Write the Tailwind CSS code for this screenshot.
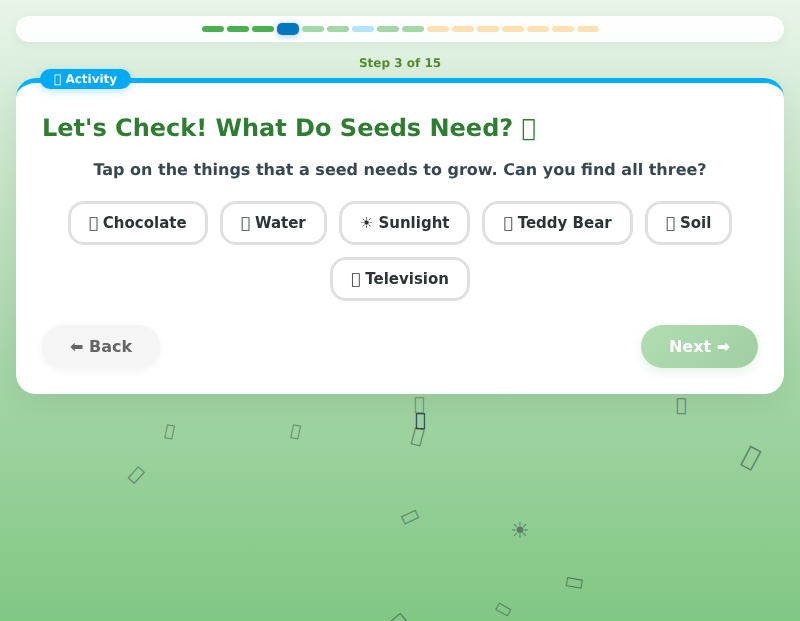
<!DOCTYPE html>
<html lang="en">
<head>
<meta charset="utf-8">
<script src="https://cdn.jsdelivr.net/npm/@tailwindcss/browser@4"></script>
</head>
<body class="m-0">
<div class="relative w-[800px] h-[621px] overflow-hidden font-['DejaVu_Sans',sans-serif] [text-rendering:geometricPrecision] bg-[linear-gradient(180deg,#e8f5e9_0%,#a5d6a7_60%,#81c784_100%)]">
  <div aria-hidden="true" class="absolute inset-0 text-[#263238]">
    <span class="absolute left-[414px] top-[395px] text-[18px] leading-[20px] opacity-40">&#xE000;</span>
    <span class="absolute left-[415px] top-[411px] text-[18px] leading-[20px]">&#xE000;</span>
    <span class="absolute left-[412px] top-[424px] text-[20px] leading-[22px] opacity-50 rotate-[15deg]">&#xE000;</span>
    <span class="absolute left-[165px] top-[422px] text-[16px] leading-[18px] opacity-50 rotate-[12deg]">&#xE000;</span>
    <span class="absolute left-[291px] top-[422px] text-[16px] leading-[18px] opacity-50 rotate-[12deg]">&#xE000;</span>
    <span class="absolute left-[131px] top-[465px] text-[18px] leading-[20px] opacity-50 rotate-[42deg]">&#xE000;</span>
    <span class="absolute left-[405px] top-[507px] text-[18px] leading-[20px] opacity-50 rotate-[65deg]">&#xE000;</span>
    <span class="absolute left-[510px] top-[520px] text-[22px] leading-[24px] opacity-50">☀</span>
    <span class="absolute left-[569px] top-[573px] text-[18px] leading-[20px] opacity-50 rotate-[100deg]">&#xE000;</span>
    <span class="absolute left-[499px] top-[601px] text-[16px] leading-[18px] opacity-50 rotate-[120deg]">&#xE000;</span>
    <span class="absolute left-[392px] top-[610px] text-[20px] leading-[22px] opacity-50 rotate-[50deg]">&#xE000;</span>
    <span class="absolute left-[676px] top-[396px] text-[18px] leading-[20px] opacity-50">&#xE000;</span>
    <span class="absolute left-[744px] top-[444px] text-[25px] leading-[26px] opacity-50 rotate-[28deg]">&#xE000;</span>
  </div>

  <div class="relative flex flex-col p-4 [will-change:transform]">
    <div class="flex justify-center gap-[3px] items-center h-[26px] rounded-[13px] bg-white/90 shadow-[0_2px_12px_rgba(0,0,0,0.05)]">
      <span class="w-[22px] h-[6px] rounded-full bg-[#4caf50]"></span>
      <span class="w-[22px] h-[6px] rounded-full bg-[#4caf50]"></span>
      <span class="w-[22px] h-[6px] rounded-full bg-[#4caf50]"></span>
      <span class="w-[22px] h-[12px] rounded-[5px] bg-[#0277bd] shadow-[0_1px_6px_rgba(2,119,189,0.4)]"></span>
      <span class="w-[22px] h-[6px] rounded-full bg-[#a5d6a7]"></span>
      <span class="w-[22px] h-[6px] rounded-full bg-[#a5d6a7]"></span>
      <span class="w-[22px] h-[6px] rounded-full bg-[#b3e5fc]"></span>
      <span class="w-[22px] h-[6px] rounded-full bg-[#a5d6a7]"></span>
      <span class="w-[22px] h-[6px] rounded-full bg-[#a5d6a7]"></span>
      <span class="w-[22px] h-[6px] rounded-full bg-[#ffe0b2]"></span>
      <span class="w-[22px] h-[6px] rounded-full bg-[#ffe0b2]"></span>
      <span class="w-[22px] h-[6px] rounded-full bg-[#ffe0b2]"></span>
      <span class="w-[22px] h-[6px] rounded-full bg-[#ffe0b2]"></span>
      <span class="w-[22px] h-[6px] rounded-full bg-[#ffe0b2]"></span>
      <span class="w-[22px] h-[6px] rounded-full bg-[#ffe0b2]"></span>
      <span class="w-[22px] h-[6px] rounded-full bg-[#ffe0b2]"></span>
    </div>

    <p class="mt-[14px] text-center text-[12px] leading-[15px] font-bold text-[#558b2f]">Step 3 of 15</p>

    <div class="relative mt-[7px] h-[316px] rounded-[20px] bg-white border-t-[5px] border-[#00b0ff] px-[26px] pt-[27px] shadow-[0_8px_32px_rgba(0,0,0,0.08)]">
      <span class="absolute left-[24px] top-[-14px] h-[20px] px-[14px] rounded-full bg-[#03a9f4] text-white text-[12px] leading-[20px] font-bold shadow-[0_2px_8px_rgba(3,169,244,0.3)]">&#xE000; Activity</span>
      <h1 class="text-[24px] leading-[36px] font-bold text-[#2e7d32]">Let's Check! What Do Seeds Need? &#xE000;</h1>
      <p class="mt-[12px] text-center text-[16px] leading-[24px] font-bold text-[#37474f]">Tap on the things that a seed needs to grow. Can you find all three?</p>
      <div class="mt-[19px] flex flex-wrap justify-center gap-3">
        <button class="h-[44px] px-[18px] rounded-2xl border-[3px] border-[#e0e0e0] bg-white text-[15px] font-bold text-[#2d3436]">&#xE000; Chocolate</button>
        <button class="h-[44px] px-[18px] rounded-2xl border-[3px] border-[#e0e0e0] bg-white text-[15px] font-bold text-[#2d3436]">&#xE000; Water</button>
        <button class="h-[44px] px-[18px] rounded-2xl border-[3px] border-[#e0e0e0] bg-white text-[15px] font-bold text-[#2d3436]">☀ Sunlight</button>
        <button class="h-[44px] px-[18px] rounded-2xl border-[3px] border-[#e0e0e0] bg-white text-[15px] font-bold text-[#2d3436]">&#xE000; Teddy Bear</button>
        <button class="h-[44px] px-[18px] rounded-2xl border-[3px] border-[#e0e0e0] bg-white text-[15px] font-bold text-[#2d3436]">&#xE000; Soil</button>
        <button class="h-[44px] px-[18px] rounded-2xl border-[3px] border-[#e0e0e0] bg-white text-[15px] font-bold text-[#2d3436]">&#xE000; Television</button>
      </div>
      <div class="mt-[24px] flex justify-between">
        <button class="w-[118px] h-[43px] rounded-full bg-[#f5f5f5] text-[16px] font-bold text-[#666666] shadow-[0_2px_8px_rgba(0,0,0,0.06)]">⬅ Back</button>
        <button class="w-[117px] h-[43px] rounded-full bg-[linear-gradient(135deg,#66bb6a,#43a047)] opacity-50 text-[16px] font-bold text-white shadow-[0_4px_12px_rgba(76,175,80,0.3)]">Next ➡</button>
      </div>
    </div>
  </div>
</div>
</body>
</html>
